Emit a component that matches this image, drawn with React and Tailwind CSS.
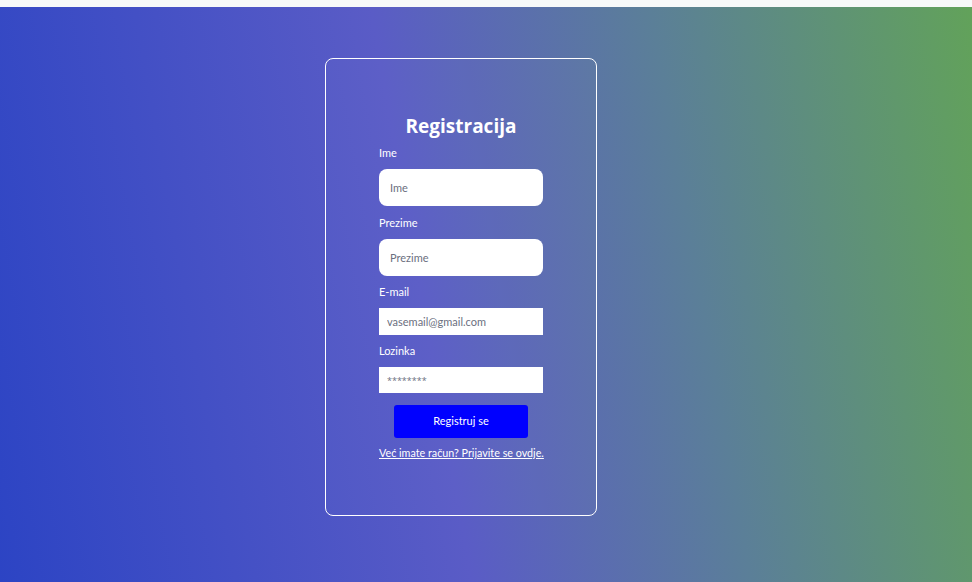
import React from 'react'

const fieldLabel = 'block text-[11px] leading-4 text-white'

const Register = () => {
    return (
        <div className="min-h-screen flex flex-col bg-[#f7f9f9] font-['Lato',sans-serif]">
            <div className="h-[7px] shrink-0" />
            <div className="flex-1 flex justify-center pt-[51px] pr-[50px] bg-[linear-gradient(80deg,#2c44c4_0%,#5a5cc6_44%,#5b7f98_70%,#62a25a_100%)]">
                <div className="w-[272px] h-[458px] border border-white rounded-lg bg-white/[0.02] pt-[55px] px-[53px]">
                    <h1 className="text-[19px] leading-6 font-bold text-white text-center font-['Open_Sans',sans-serif]">
                        Registracija
                    </h1>

                    <form className="mt-[7px]" onSubmit={(e) => e.preventDefault()}>
                        <label className={fieldLabel}>Ime</label>
                        <input
                            type="text"
                            placeholder="Ime"
                            className="mt-2 w-full h-[37px] rounded-lg bg-white px-[11px] text-[11px] text-gray-800 placeholder:text-[#6b6f80] outline-none"
                        />

                        <label className={`${fieldLabel} mt-[9px]`}>Prezime</label>
                        <input
                            type="text"
                            placeholder="Prezime"
                            className="mt-2 w-full h-[37px] rounded-lg bg-white px-[11px] text-[11px] text-gray-800 placeholder:text-[#6b6f80] outline-none"
                        />

                        <label className={`${fieldLabel} mt-2`}>E-mail</label>
                        <input
                            type="email"
                            placeholder="vasemail@gmail.com"
                            className="mt-2 w-full h-[27px] bg-white px-2 text-[11px] text-gray-800 placeholder:text-[#6b6f80] outline-none"
                        />

                        <label className={`${fieldLabel} mt-2`}>Lozinka</label>
                        <input
                            type="password"
                            placeholder="********"
                            className="mt-2 w-full h-[26px] bg-white px-2 text-[9px] text-gray-800 placeholder:text-[#6b6f80] outline-none font-['Open_Sans',sans-serif]"
                        />

                        <div className="mt-3 flex justify-center">
                            <button
                                type="submit"
                                className="w-[134px] h-[33px] rounded-[3px] bg-[#0000ff] text-white text-[11px]"
                            >
                                Registruj se
                            </button>
                        </div>

                        <a href="#" className="mt-[7px] block text-[10.75px] leading-4 text-white underline whitespace-nowrap">
                            Već imate račun? Prijavite se ovdje.
                        </a>
                    </form>
                </div>
            </div>
        </div>
    )
}

export default Register
